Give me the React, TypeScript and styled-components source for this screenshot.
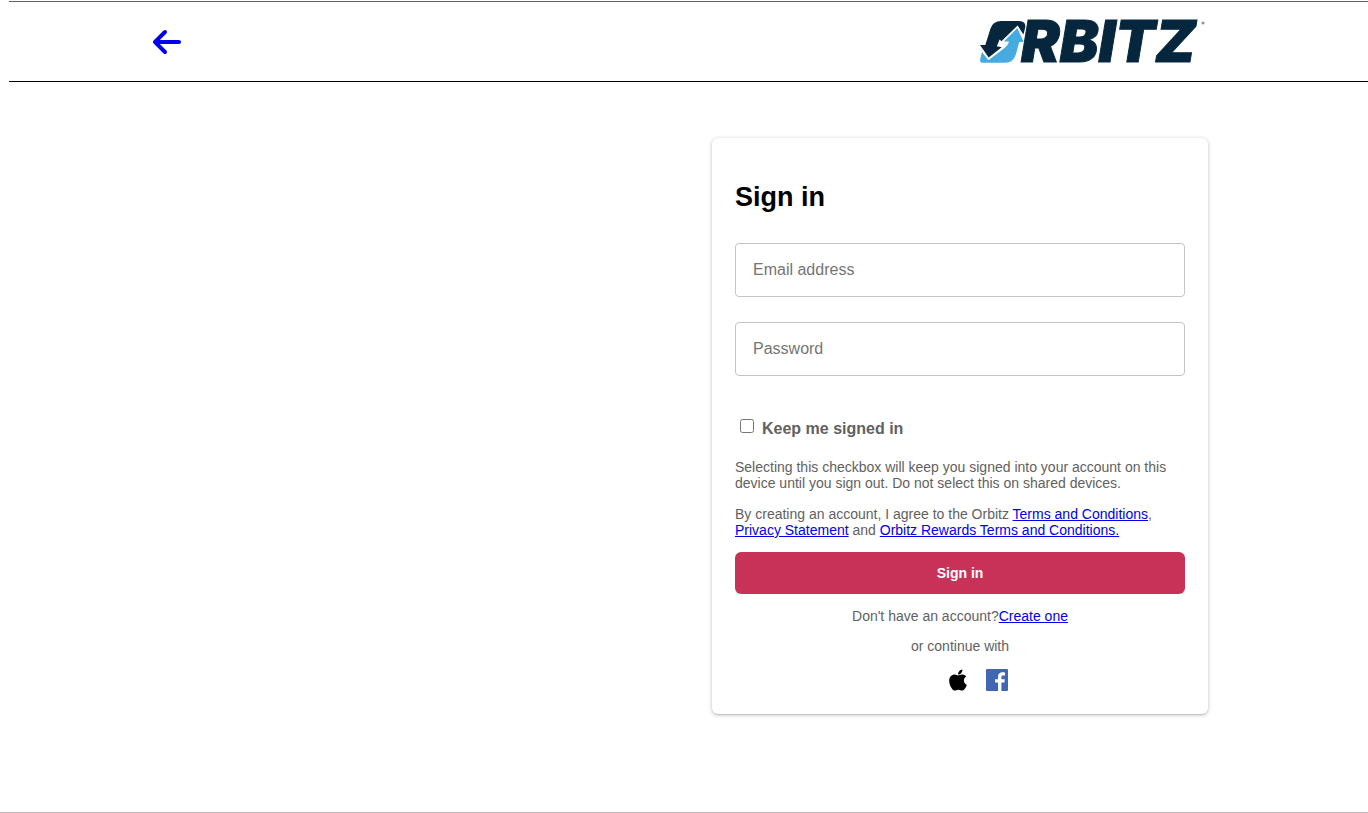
import React from "react";
import styled, { createGlobalStyle } from "styled-components";
import { FaApple, FaArrowLeft } from "react-icons/fa6";

const GlobalStyle = createGlobalStyle`
  *, *::before, *::after {
    box-sizing: border-box;
  }
  body {
    margin: 0;
    background: #fff;
    color: #616161;
    font-family: "Liberation Sans", Arial, sans-serif;
    font-size: 14px;
    line-height: 16px;
  }
`;

const Page = styled.div`
  display: flex;
  flex-direction: column;
  min-height: 100vh;
  padding-top: 1px;
  border-bottom: 1px solid #c3b3ba;
`;

const Header = styled.header`
  display: flex;
  align-items: center;
  justify-content: space-between;
  height: 81px;
  margin-left: 9px;
  padding: 0 162px 0 143px;
  border-top: 1px solid #616161;
  border-bottom: 1px solid #000;
`;

const BackLink = styled.a`
  display: flex;
  color: #0000ee;

  svg {
    width: 30px;
    height: 32px;
  }
`;

const LogoLink = styled.a`
  display: flex;
`;

const Logo = styled.svg`
  overflow: visible;
`;

const Main = styled.main`
  display: flex;
  justify-content: flex-end;
  padding: 56px 160px 96px;
`;

const Card = styled.form`
  width: 496px;
  padding: 43px 23px 22px;
  border-radius: 6px;
  background: #fff;
  box-shadow: 0 1px 4px rgba(12, 14, 28, 0.24), 0 1px 1px rgba(12, 14, 28, 0.12);
`;

const Title = styled.h1`
  margin: 0 0 30px;
  color: #000;
  font-size: 27px;
  line-height: 32px;
`;

const Field = styled.input`
  display: block;
  width: 100%;
  height: 54px;
  margin: 0 0 25px;
  padding: 0 17px;
  border: 1px solid #c4c4c4;
  border-radius: 4px;
  background: #fff;
  color: #000;
  font: inherit;
  font-size: 16px;

  &::placeholder {
    color: #757575;
  }
`;

const KeepRow = styled.div`
  display: flex;
  align-items: flex-start;
  gap: 8px;
  margin: 43px 0 20px;
  padding-left: 5px;
`;

const Checkbox = styled.input`
  width: 14px;
  height: 14px;
  margin: 0;
`;

const KeepLabel = styled.label`
  font-size: 16px;
  font-weight: bold;
  line-height: 20px;
`;

const Legal = styled.div`
  display: flex;
  flex-direction: column;
  gap: 15px;
  margin-bottom: 14px;
`;

const Note = styled.p`
  margin: 0;
`;

const CenteredNote = styled(Note)`
  margin-bottom: 14px;
  text-align: center;
`;

const TextLink = styled.a`
  color: #0000ee;
  text-decoration: underline;
`;

const SubmitButton = styled.button`
  display: block;
  width: 100%;
  height: 42px;
  margin: 0 0 14px;
  border: 0;
  border-radius: 6px;
  background: #c83259;
  color: #fff;
  font: inherit;
  font-weight: bold;
`;

const Providers = styled.div`
  display: flex;
  align-items: center;
  justify-content: center;
  gap: 18px;
  padding-left: 36px;
`;

const ProviderButton = styled.button`
  display: flex;
  padding: 0;
  border: 0;
  background: none;
  color: #000;
`;

const AppleIcon = styled(FaApple)`
  width: 20px;
  height: 24px;
`;

function OrbitzLogo() {
  return (
    <Logo width="228" height="46" viewBox="0 0 228 46" role="img" aria-label="Orbitz">
      <path
        fill="#05263d"
        d="M2 26H7.3L12.5 9.5Q15 2 23 2H40Q49 2 47 9.5L45.4 15.5L39.6 6.6L23.4 22.2L21.6 20.5Q19.6 25.5 18.7 27.3L23.7 28.2L10.7 38.5Z"
      />
      <path
        fill="#45abe0"
        d="M4 33L10.4 41.3L24.6 30.4Q30 26.6 31 22.4H25.8L39.4 9L45.6 23H41.2L38 35Q35.4 43.8 27 43.8H5Q1.4 43.8 2.2 40Z"
      />
      <text
        x="43"
        y="43"
        fill="#05263d"
        stroke="#05263d"
        strokeWidth="1"
        fontFamily="Inter, sans-serif"
        fontSize="58"
        fontWeight="900"
        fontStyle="italic"
      >
        RBITZ
      </text>
      <circle cx="225" cy="4" r="1" fill="none" stroke="#5c7080" />
    </Logo>
  );
}

function FacebookIcon() {
  return (
    <svg width="22" height="22" viewBox="0 0 22 22" aria-hidden="true">
      <rect width="22" height="22" rx="1" fill="#4267b2" />
      <path
        fill="#fff"
        d="M12 22V13.5H9V10.2H12V7.7C12 4.8 13.8 3.2 16.4 3.2C17.6 3.2 18.7 3.3 19 3.4V6.4H17.2C15.7 6.4 15.4 7.1 15.4 8.1V10.2H18.8L18.4 13.5H15.4V22Z"
      />
    </svg>
  );
}

export default function App() {
  return (
    <>
      <GlobalStyle />
      <Page>
        <Header>
          <BackLink href="#" aria-label="Back">
            <FaArrowLeft />
          </BackLink>
          <LogoLink href="#">
            <OrbitzLogo />
          </LogoLink>
        </Header>
        <Main>
          <Card onSubmit={(event) => event.preventDefault()}>
            <Title>Sign in</Title>
            <Field type="email" placeholder="Email address" aria-label="Email address" />
            <Field type="password" placeholder="Password" aria-label="Password" />
            <KeepRow>
              <Checkbox type="checkbox" id="keep" />
              <KeepLabel htmlFor="keep">Keep me signed in</KeepLabel>
            </KeepRow>
            <Legal>
              <Note>
                Selecting this checkbox will keep you signed into your account on this device until
                you sign out. Do not select this on shared devices.
              </Note>
              <Note>
                By creating an account, I agree to the Orbitz{" "}
                <TextLink href="#">Terms and Conditions</TextLink>,{" "}
                <TextLink href="#">Privacy Statement</TextLink> and{" "}
                <TextLink href="#">Orbitz Rewards Terms and Conditions.</TextLink>
              </Note>
            </Legal>
            <SubmitButton type="submit">Sign in</SubmitButton>
            <CenteredNote>
              Don't have an account?<TextLink href="#">Create one</TextLink>
            </CenteredNote>
            <CenteredNote>or continue with</CenteredNote>
            <Providers>
              <ProviderButton type="button" aria-label="Continue with Apple">
                <AppleIcon />
              </ProviderButton>
              <ProviderButton type="button" aria-label="Continue with Facebook">
                <FacebookIcon />
              </ProviderButton>
            </Providers>
          </Card>
        </Main>
      </Page>
    </>
  );
}
